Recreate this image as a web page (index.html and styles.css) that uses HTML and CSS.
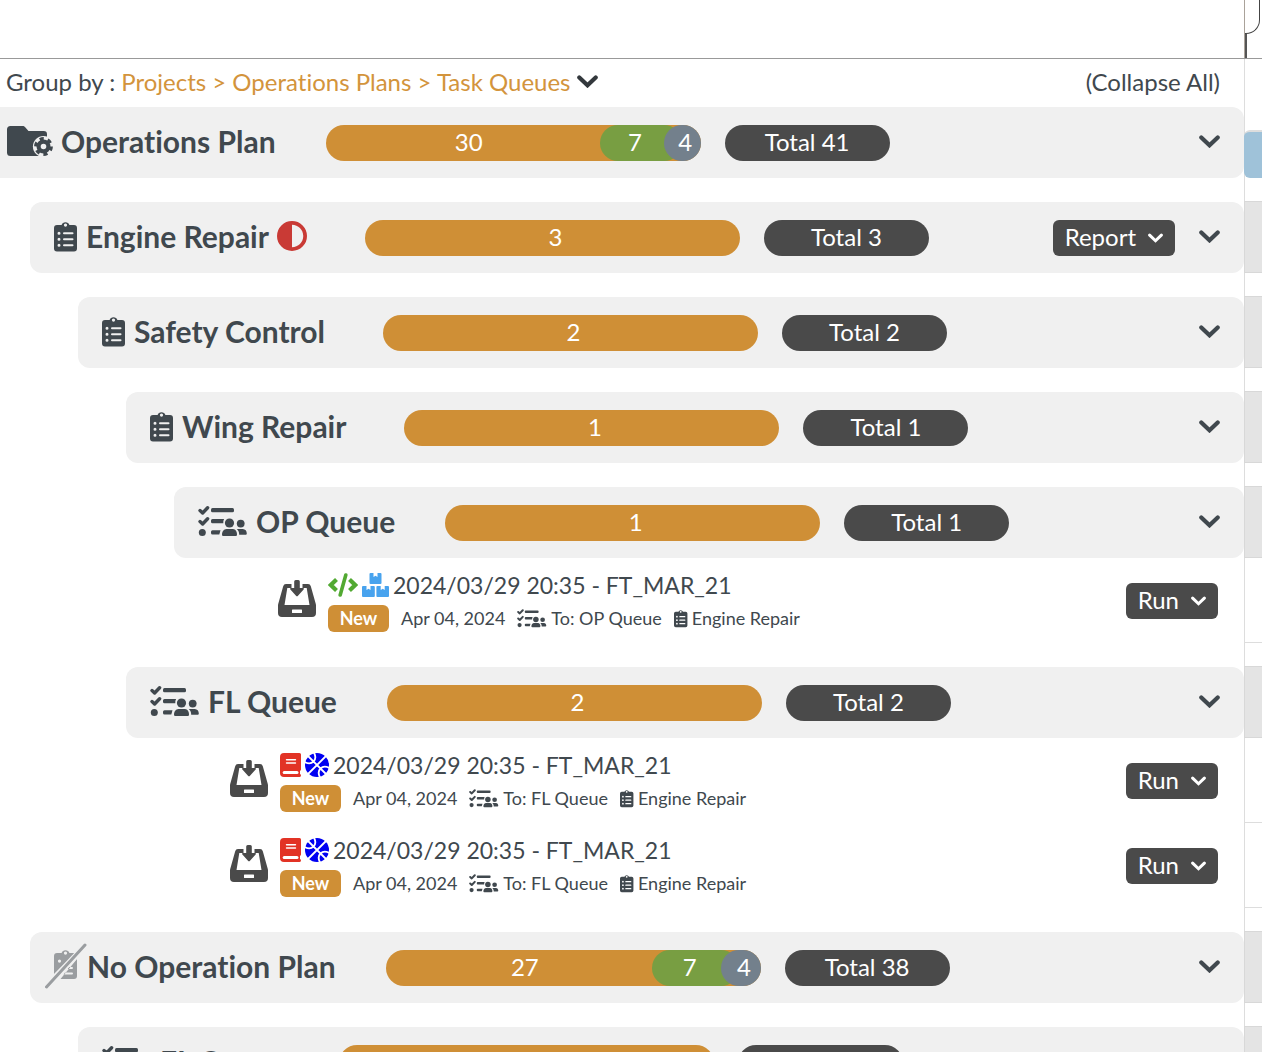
FILE: index.html
```
<!DOCTYPE html>
<html lang="en">
<head>
    <meta charset="utf-8">
    <title>Operations Plan</title>
    <link rel="stylesheet" href="styles.css">
</head>
<body>
    <!-- icon set -->
    <svg class="sprite" aria-hidden="true">
        <symbol id="chevron" viewBox="0 0 21 13">
            <path d="M2.3 2.5 10.5 10.3 18.7 2.5" fill="none" stroke="currentColor" stroke-width="4.2" stroke-linecap="round"/>
        </symbol>
        <symbol id="clipboard" viewBox="0 0 24 31">
            <path fill="currentColor" fill-rule="evenodd" d="M3 4h4.6a4.1 4.1 0 0 1 7.8 0H20a3 3 0 0 1 3 3v20.500a3 3 0 0 1-3 3H3a3 3 0 0 1-3-3V7a3 3 0 0 1 3-3zM11.500 2.500a1.600 1.600 0 1 0 0 3.200 1.600 1.600 0 0 0 0-3.200zM5 10.800a1.500 1.500 0 1 0 0 3 1.500 1.500 0 0 0 0-3zm0 6a1.500 1.500 0 1 0 0 3 1.500 1.500 0 0 0 0-3zm0 6a1.500 1.500 0 1 0 0 3 1.500 1.500 0 0 0 0-3zM10 11.300a1 1 0 0 0 0 2h8.500a1 1 0 0 0 0-2zm0 6a1 1 0 0 0 0 2h8.500a1 1 0 0 0 0-2zm0 6a1 1 0 0 0 0 2h8.500a1 1 0 0 0 0-2z"/>
        </symbol>
        <symbol id="queue" viewBox="0 0 50 31">
            <g fill="none" stroke="currentColor" stroke-width="3.4" stroke-linecap="round" stroke-linejoin="round">
                <path d="M2 4.600 4.600 7 9.600 1.800M2 15.600 4.600 18 9.600 12.800"/>
            </g>
            <g fill="currentColor">
                <circle cx="4.300" cy="26.500" r="3.500"/>
                <rect x="13" y="2" width="23" height="4.200" rx="1.500"/>
                <path d="M14.500 13h11.600a7 7 0 0 0-.8 4.200H14.500A1.500 1.500 0 0 1 13 15.700v-1.200A1.500 1.500 0 0 1 14.500 13zM14.500 24.200h8l-1.200 4.200h-6.800a1.500 1.500 0 0 1-1.500-1.500v-1.200a1.500 1.500 0 0 1 1.500-1.500z"/>
                <circle cx="31.500" cy="17" r="4.600"/>
                <path d="M28.500 23h6.500c2.500 0 4 2.800 4 5.500 0 1-.6 1.500-1.500 1.500H25.500c-.9 0-1.500-.5-1.500-1.500 0-2.700 1.800-5.500 4.500-5.500z"/>
                <circle cx="42.700" cy="17.600" r="3.900"/>
                <path d="M38.800 23h6c2.500 0 4 2.200 4 4.400 0 .8-.5 1.300-1.300 1.300h-6.300c0-2.400-.7-4.300-2.400-5.700z"/>
            </g>
        </symbol>
        <symbol id="folder-gear" viewBox="0 0 46 31">
            <path fill="currentColor" d="M3.500 0h12c1.200 0 2 .5 2.700 1.200L21.500 5h15.200a3.300 3.300 0 0 1 3.300 3.300V26.700a3.300 3.300 0 0 1-3.300 3.300H3.500A3.500 3.500 0 0 1 0 26.500v-23A3.500 3.500 0 0 1 3.500 0z"/>
            <circle cx="36.500" cy="20.500" r="10.600" fill="#f0f0f0"/>
            <circle cx="36.500" cy="20.500" r="7.700" fill="none" stroke="currentColor" stroke-width="3.400" stroke-dasharray="4.060 4"/>
            <circle cx="36.500" cy="20.500" r="4.900" fill="none" stroke="currentColor" stroke-width="4.200"/>
        </symbol>
        <symbol id="half" viewBox="0 0 512 512">
            <path fill="currentColor" d="M448 256c0-106-86-192-192-192v384c106 0 192-86 192-192zM0 256a256 256 0 1 1 512 0A256 256 0 1 1 0 256z"/>
        </symbol>
        <symbol id="inbox" viewBox="0 0 38 37">
            <path fill="currentColor" fill-rule="evenodd" d="M8 4h22a3 3 0 0 1 2.800 2.200L37.800 24q.2.700.2 1.400V33a4 4 0 0 1-4 4H4a4 4 0 0 1-4-4v-7.600q0-.7.200-1.400L5.200 6.200A3 3 0 0 1 8 4zM9.300 8 6.500 25h25L28.700 8zM14.500 29.500h9a.5.500 0 0 1 .5.500v2.500a.5.500 0 0 1-.5.500h-9a.5.500 0 0 1-.5-.5V30a.5.500 0 0 1 .5-.5z"/>
            <path fill="#fff" d="M13.500 3.500h11V9h-11z"/>
            <path fill="currentColor" d="M16.200 1.500A1.500 1.500 0 0 1 17.700 0h2.600a1.500 1.500 0 0 1 1.500 1.500V8H25c1 0 1.200.9.600 1.500L20 15.700a1.400 1.400 0 0 1-2 0l-5.600-6.200c-.6-.6-.4-1.500.6-1.500h3.200z"/>
        </symbol>
        <symbol id="code" viewBox="0 0 30 24">
            <g fill="none" stroke="#52a932" stroke-width="3.600" stroke-linecap="round">
                <path d="M8.500 6.500 2.800 12 8.500 17.500M21.500 6.500 27.200 12 21.500 17.500" stroke-linecap="butt" stroke-width="4.200"/>
                <path d="M17.800 2 12.200 22"/>
            </g>
        </symbol>
        <symbol id="boxes" viewBox="0 0 27 24">
            <g fill="#48a3ee">
                <rect x="7.500" width="12" height="11" rx="1"/>
                <rect y="13" width="12.800" height="11" rx="1"/>
                <rect x="14.400" y="13" width="12.600" height="11" rx="1"/>
            </g>
            <path fill="#fff" d="M11.500 0h4v4l-2-1.200-2 1.200zM4.500 13h4v4l-2-1.200-2 1.200zM18.700 13h4v4l-2-1.200-2 1.200z"/>
        </symbol>
        <symbol id="book" viewBox="0 0 21 24">
            <path fill="#e23325" d="M4 0h15.500A1.500 1.500 0 0 1 21 1.500v15a1.500 1.500 0 0 1-1 1.400v3.200a1.500 1.500 0 0 1-.5 2.900H4a4 4 0 0 1-4-4V4a4 4 0 0 1 4-4z"/>
            <path fill="none" stroke="#fff" stroke-linecap="round" d="M4.200 19.600H17" stroke-width="3"/>
            <path fill="none" stroke="#fff" stroke-linecap="round" d="M6.500 6.700h9M6.500 10h9" stroke-width="1.400"/>
        </symbol>
        <symbol id="ball" viewBox="0 0 24 24">
            <circle cx="12" cy="12" r="12" fill="#0000f2"/>
            <path fill="none" stroke="#fff" stroke-width="1.800" d="M3 3 21 21M21 3 3 21M8.600-1C11 3 10.500 6.500 8.500 8.500S3 11 -1 8.600M15.400 25c-2.400-4-1.900-7.500.1-9.500S21 13 25 15.400"/>
        </symbol>
        <symbol id="clipboard-off" viewBox="0 0 42 46">
            <g fill="#9a9da0">
                <path fill-rule="evenodd" d="M12 10h4.600a4.100 4.100 0 0 1 7.800 0H28a4 4 0 0 1 2 .5L9 31V13a3 3 0 0 1 3-3zM20.500 8.500a1.600 1.600 0 1 0 0 3.200 1.600 1.600 0 0 0 0-3.200zM14.500 16.500a1.600 1.600 0 1 0 0 3.200 1.600 1.600 0 0 0 0-3.200z"/>
                <path fill-rule="evenodd" d="M32 16v17a3 3 0 0 1-3 3H15.500L32 16zM27 24h-3l-1.600 2H27a1 1 0 0 0 0-2zm0 5.500h-7l-1.500 2H27a1 1 0 0 0 0-2z"/>
            </g>
            <path fill="none" stroke="#f0f0f0" stroke-width="6" d="M3 42 39 4"/>
            <path fill="none" stroke="#9a9da0" stroke-width="3" stroke-linecap="round" d="M1.500 44 40 2"/>
        </symbol>
    </svg>

    <div class="page">
        <div class="top">
            <div class="top-main"></div>
            <div class="top-side"><div class="tab"></div></div>
        </div>

        <div class="content">
            <main class="tree">
                <div class="toolbar">
                    <div class="group-by">
                        <span id="group-label">Group by :</span>
                        <button type="button" class="group-button" aria-labelledby="group-label group-value">
                            <span id="group-value">Projects &gt; Operations Plans &gt; Task Queues</span>
                            <svg class="chevron"><use href="#chevron"/></svg>
                        </button>
                    </div>
                    <button type="button" class="collapse">(Collapse All)</button>
                </div>

                <section class="row level-0">
                    <h2 class="title"><svg class="icon-folder"><use href="#folder-gear"/></svg>Operations Plan</h2>
                    <div class="bar">
                        <span class="seg" style="flex-grow: 30">30</span>
                        <span class="seg done" style="flex-grow: 7">7</span>
                        <span class="seg closed" style="flex-grow: 4">4</span>
                    </div>
                    <span class="total">Total 41</span>
                    <div class="actions">
                        <button type="button" class="toggle" aria-label="Collapse Operations Plan"><svg class="chevron"><use href="#chevron"/></svg></button>
                    </div>
                </section>

                <section class="row level-1">
                    <h2 class="title"><svg class="icon-clipboard"><use href="#clipboard"/></svg>Engine Repair<svg class="icon-half"><use href="#half"/></svg></h2>
                    <div class="bar plan-bar"><span class="seg only">3</span></div>
                    <span class="total">Total 3</span>
                    <div class="actions">
                        <button type="button" class="button">Report<svg class="chevron-small"><use href="#chevron"/></svg></button>
                        <button type="button" class="toggle" aria-label="Collapse Engine Repair"><svg class="chevron"><use href="#chevron"/></svg></button>
                    </div>
                </section>

                <section class="row level-2">
                    <h2 class="title"><svg class="icon-clipboard"><use href="#clipboard"/></svg>Safety Control</h2>
                    <div class="bar plan-bar"><span class="seg only">2</span></div>
                    <span class="total">Total 2</span>
                    <div class="actions">
                        <button type="button" class="toggle" aria-label="Collapse Safety Control"><svg class="chevron"><use href="#chevron"/></svg></button>
                    </div>
                </section>

                <section class="row level-3">
                    <h2 class="title"><svg class="icon-clipboard"><use href="#clipboard"/></svg>Wing Repair</h2>
                    <div class="bar plan-bar"><span class="seg only">1</span></div>
                    <span class="total">Total 1</span>
                    <div class="actions">
                        <button type="button" class="toggle" aria-label="Collapse Wing Repair"><svg class="chevron"><use href="#chevron"/></svg></button>
                    </div>
                </section>

                <section class="row open level-4">
                    <h2 class="title"><svg class="icon-queue"><use href="#queue"/></svg>OP Queue</h2>
                    <div class="bar"><span class="seg only">1</span></div>
                    <span class="total">Total 1</span>
                    <div class="actions">
                        <button type="button" class="toggle" aria-label="Collapse OP Queue"><svg class="chevron"><use href="#chevron"/></svg></button>
                    </div>
                </section>
                <div class="tasks level-4">
                    <article class="task">
                        <svg class="icon-inbox"><use href="#inbox"/></svg>
                        <div class="task-text">
                            <div class="task-name"><svg class="icon-code"><use href="#code"/></svg><svg class="icon-boxes"><use href="#boxes"/></svg>2024/03/29 20:35 - FT_MAR_21</div>
                            <div class="task-info">
                                <span class="badge">New</span>
                                <span>Apr 04, 2024</span>
                                <span class="meta"><svg class="meta-queue"><use href="#queue"/></svg>To: OP Queue</span>
                                <span class="meta"><svg class="meta-clipboard"><use href="#clipboard"/></svg>Engine Repair</span>
                            </div>
                        </div>
                        <button type="button" class="button">Run<svg class="chevron-small"><use href="#chevron"/></svg></button>
                    </article>
                </div>

                <section class="row open level-3">
                    <h2 class="title"><svg class="icon-queue"><use href="#queue"/></svg>FL Queue</h2>
                    <div class="bar"><span class="seg only">2</span></div>
                    <span class="total">Total 2</span>
                    <div class="actions">
                        <button type="button" class="toggle" aria-label="Collapse FL Queue"><svg class="chevron"><use href="#chevron"/></svg></button>
                    </div>
                </section>
                <div class="tasks level-3">
                    <article class="task">
                        <svg class="icon-inbox"><use href="#inbox"/></svg>
                        <div class="task-text">
                            <div class="task-name"><svg class="icon-book"><use href="#book"/></svg><svg class="icon-ball"><use href="#ball"/></svg>2024/03/29 20:35 - FT_MAR_21</div>
                            <div class="task-info">
                                <span class="badge">New</span>
                                <span>Apr 04, 2024</span>
                                <span class="meta"><svg class="meta-queue"><use href="#queue"/></svg>To: FL Queue</span>
                                <span class="meta"><svg class="meta-clipboard"><use href="#clipboard"/></svg>Engine Repair</span>
                            </div>
                        </div>
                        <button type="button" class="button">Run<svg class="chevron-small"><use href="#chevron"/></svg></button>
                    </article>
                    <article class="task">
                        <svg class="icon-inbox"><use href="#inbox"/></svg>
                        <div class="task-text">
                            <div class="task-name"><svg class="icon-book"><use href="#book"/></svg><svg class="icon-ball"><use href="#ball"/></svg>2024/03/29 20:35 - FT_MAR_21</div>
                            <div class="task-info">
                                <span class="badge">New</span>
                                <span>Apr 04, 2024</span>
                                <span class="meta"><svg class="meta-queue"><use href="#queue"/></svg>To: FL Queue</span>
                                <span class="meta"><svg class="meta-clipboard"><use href="#clipboard"/></svg>Engine Repair</span>
                            </div>
                        </div>
                        <button type="button" class="button">Run<svg class="chevron-small"><use href="#chevron"/></svg></button>
                    </article>
                </div>

                <section class="row level-1 no-plan">
                    <h2 class="title"><svg class="icon-off"><use href="#clipboard-off"/></svg>No Operation Plan</h2>
                    <div class="bar">
                        <span class="seg" style="flex-grow: 27">27</span>
                        <span class="seg done" style="flex-grow: 7">7</span>
                        <span class="seg closed" style="flex-grow: 4">4</span>
                    </div>
                    <span class="total">Total 38</span>
                    <div class="actions">
                        <button type="button" class="toggle" aria-label="Collapse No Operation Plan"><svg class="chevron"><use href="#chevron"/></svg></button>
                    </div>
                </section>

                <section class="row level-2">
                    <h2 class="title"><svg class="icon-queue"><use href="#queue"/></svg>FL Queue</h2>
                    <div class="bar"></div>
                    <span class="total"></span>
                </section>
            </main>

            <!-- left edge of the timeline -->
            <aside class="timeline">
                <div class="slot-head"></div>
                <div class="slot-plan"></div>
                <div class="slot"></div>
                <div class="slot"></div>
                <div class="slot"></div>
                <div class="slot"></div>
                <div class="slot-task"></div>
                <div class="slot"></div>
                <div class="slot-task"></div>
                <div class="slot-task"></div>
                <div class="slot"></div>
                <div class="slot"></div>
            </aside>
        </div>
    </div>
</body>
</html>
```
FILE: styles.css
```
* { box-sizing: border-box; }
body { margin: 0; font-family: Lato, sans-serif; font-size: 24px; line-height: 34px; color: #40484e; background: #fff; font-variant-ligatures: none; }
button { font: inherit; color: inherit; background: none; border: 0; padding: 0; margin: 0; cursor: pointer; }
svg { display: block; flex: none; }
.sprite { position: absolute; width: 0; height: 0; }

.page { height: 100vh; overflow: hidden; }
.top, .content { display: grid; grid-template-columns: 1fr 18px; }
.top { height: 59px; border-bottom: 1px solid #999; }
.top-side { border-left: 1px solid #aaa29a; }
.tab { width: 15px; height: 34px; border-right: 1px solid #444; border-bottom: 1px solid #444; border-bottom-right-radius: 14px; }
.top-side::after { content: ""; display: block; width: 2px; height: 24px; background: #555; }

.toolbar { display: flex; justify-content: space-between; align-items: center; height: 48px; padding: 0 24px 3px 6px; }
.group-by, .group-button { display: flex; align-items: center; gap: 6px; }
.group-button { color: #d3943c; }
.group-button .chevron { color: #33383c; }

.row { display: flex; align-items: center; height: 71px; margin-bottom: 24px; padding: 0 24px; background: #f0f0f0; border-radius: 12px; }
.open { margin-bottom: 0; }
.level-0 { padding-left: 7px; border-radius: 0 12px 12px 0; }
.level-1 { margin-left: 30px; }
.level-2 { margin-left: 78px; }
.level-3 { margin-left: 126px; }
.level-4 { margin-left: 174px; }
.no-plan { padding-left: 15px; }
.title { display: flex; align-items: center; gap: 8px; margin: 0; padding-bottom: 3px; font-size: 30px; font-weight: 700; white-space: nowrap; }
.no-plan .title { gap: 0; }

.bar { display: flex; flex: none; width: 375px; height: 36px; margin-left: 50px; border-radius: 18px; background: #cf8f36; color: #fff; overflow: hidden; }
.plan-bar { margin-left: 58px; }
/* each segment runs 18px under the next one */
.seg { box-sizing: content-box; flex: 1 1 0; min-width: 0; margin-right: -18px; padding: 0 12px 0 6px; border-radius: 18px; text-align: center; }
.done { padding: 0 15px 0 3px; background: #789e42; }
.closed { padding: 0 15px 0 3px; background: #73808c; }
.only { margin: 0; padding: 0 0 0 6px; }
.total { flex: none; width: 165px; height: 36px; margin-left: 24px; border-radius: 18px; background: #4a4a4a; color: #fff; text-align: center; }

.actions { display: flex; align-items: center; gap: 24px; margin-left: auto; }
.toggle { padding-bottom: 3px; }
.button { display: flex; align-items: center; gap: 12px; height: 36px; padding: 0 12px 2px; border-radius: 6px; background: #4a4a4a; color: #fff; }
.chevron { width: 21px; height: 13px; }
.chevron-small { width: 15px; height: 10px; margin-top: 3px; }

.tasks { margin-bottom: 24px; padding-left: 104px; }
.task { display: flex; align-items: center; gap: 12px; height: 85px; padding-right: 26px; }
.task .button { margin-left: auto; }
.task-name { display: flex; align-items: center; gap: 4px; height: 32px; font-size: 23px; line-height: 32px; }
.task-info { display: flex; align-items: center; gap: 12px; margin-top: 4px; font-size: 18px; line-height: 27px; }
.badge { width: 61px; height: 27px; border-radius: 6px; background: #cf8f36; color: #fff; font-weight: 700; text-align: center; }
.meta { display: flex; align-items: center; gap: 4px; }

.icon-folder { width: 46px; height: 31px; }
.icon-clipboard { width: 24px; height: 31px; }
.icon-queue { width: 50px; height: 31px; }
.icon-half { width: 30px; height: 30px; color: #c93a35; }
.icon-off { width: 42px; height: 46px; }
.icon-inbox { width: 38px; height: 37px; margin-bottom: 4px; color: #4a4a4a; }
.icon-code { width: 30px; height: 24px; }
.icon-boxes { width: 27px; height: 24px; }
.icon-book { width: 21px; height: 24px; }
.icon-ball { width: 24px; height: 24px; }
.meta-queue { width: 30px; height: 19px; }
.meta-clipboard { width: 14px; height: 19px; }

.timeline { border-left: 1px solid #ddd; }
.slot-head { height: 71px; }
.slot-plan { height: 48px; margin: 0 0 23px -1px; border-top: 2px solid #ddd; border-radius: 6px 0 0 6px; background: #9fc2d9; }
.slot { height: 72px; margin: 0 0 23px -1px; border: 1px solid #d8d8d8; border-right: 0; background: #e4e4e4; }
.slot-task { height: 85px; border-bottom: 1px solid #ddd; }
.slot:has(+ .slot-task) { margin-bottom: 0; }
.slot-task + .slot { margin-top: 23px; }
```
